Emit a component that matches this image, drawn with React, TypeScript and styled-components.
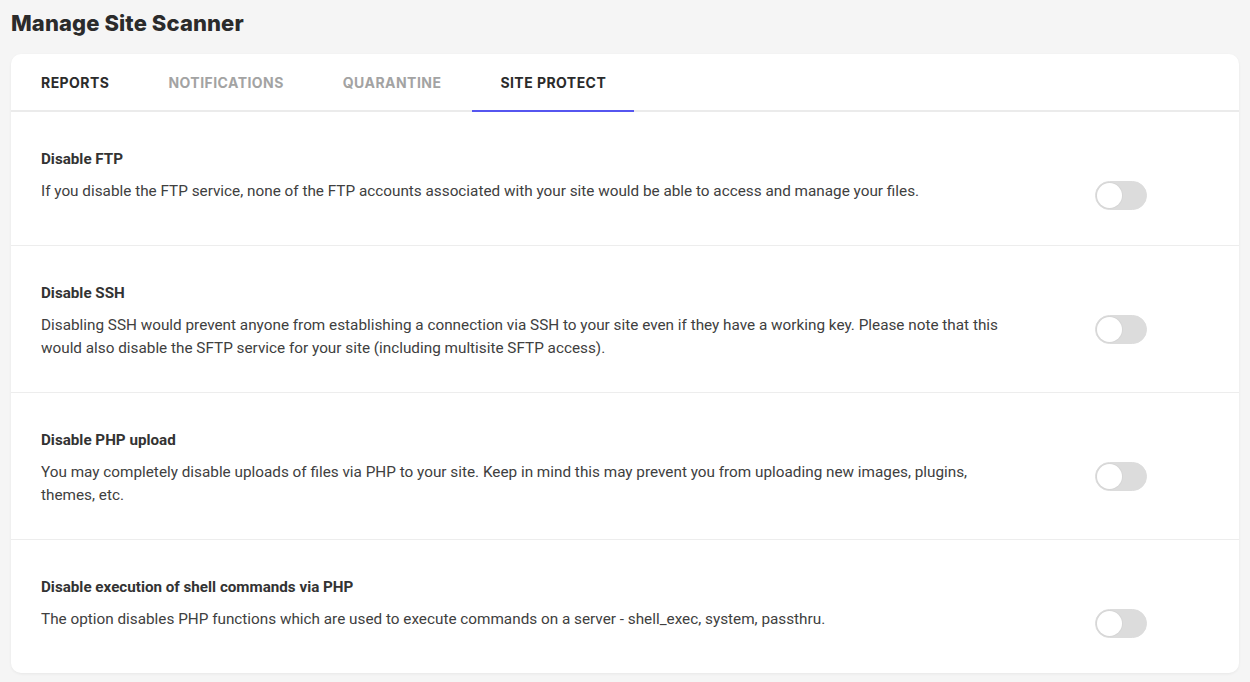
import { useState } from 'react'
import styled, { createGlobalStyle } from 'styled-components'

const GlobalStyle = createGlobalStyle`
  html, body {
    margin: 0;
    padding: 0;
    background: #f5f5f5;
  }
  * {
    box-sizing: border-box;
  }
`

const Page = styled.div`
  padding: 8px 11px 10px 11px;
  font-family: Roboto, 'Liberation Sans', sans-serif;
`

const Heading = styled.h1`
  margin: 0 0 16px 0;
  font-family: Inter, 'DejaVu Sans', sans-serif;
  font-size: 22px;
  line-height: 30px;
  font-weight: 800;
  letter-spacing: 0.1px;
  color: #2b2b2b;
`

const Card = styled.div`
  background: #fff;
  border-radius: 10px;
  box-shadow: 0 1px 3px rgba(0, 0, 0, 0.06);
  overflow: hidden;
`

const Tabs = styled.div`
  display: flex;
  height: 58px;
  padding-left: 2px;
  gap: 3px;
  border-bottom: 2px solid #ebebeb;
`

const Tab = styled.div<{ dark?: boolean; selected?: boolean }>`
  display: flex;
  align-items: center;
  padding: 0 28px;
  margin-bottom: -2px;
  font-family: Inter, 'DejaVu Sans', sans-serif;
  font-size: 14px;
  font-weight: 700;
  letter-spacing: 0.45px;
  text-transform: uppercase;
  color: ${({ dark }) => (dark ? '#2b2b2b' : '#a3a3a3')};
  border-bottom: 2px solid ${({ selected }) => (selected ? '#5656f0' : 'transparent')};
  cursor: pointer;
`

const Section = styled.div`
  padding: 36px 92px 32px 30px;
  border-top: 1px solid #ededed;

  &:first-child {
    border-top: none;
  }
`

const SectionTitle = styled.div`
  font-size: 15.2px;
  line-height: 22px;
  font-weight: 700;
  color: #333;
  margin-bottom: 10px;
`

const Row = styled.div`
  display: flex;
  align-items: flex-start;
  justify-content: space-between;
`

const Description = styled.div`
  max-width: 970px;
  font-size: 15.3px;
  line-height: 23px;
  color: #404040;
`

const SwitchWrap = styled.div`
  height: 33px;
  padding-top: 1px;
  flex-shrink: 0;
`

const Track = styled.button<{ on: boolean }>`
  position: relative;
  width: 52px;
  height: 29px;
  padding: 0;
  border: 1px solid #dcdcdc;
  border-radius: 15px;
  background: ${({ on }) => (on ? '#5656f0' : '#dcdcdc')};
  cursor: pointer;
`

const Knob = styled.span<{ on: boolean }>`
  position: absolute;
  top: 1px;
  left: ${({ on }) => (on ? '24px' : '1px')};
  width: 25px;
  height: 25px;
  border-radius: 50%;
  background: #fff;
  box-shadow: 0 0 0 1px #d6d6d6;
`

const items = [
  {
    title: 'Disable FTP',
    text: 'If you disable the FTP service, none of the FTP accounts associated with your site would be able to access and manage your files.',
  },
  {
    title: 'Disable SSH',
    text: 'Disabling SSH would prevent anyone from establishing a connection via SSH to your site even if they have a working key. Please note that this would also disable the SFTP service for your site (including multisite SFTP access).',
  },
  {
    title: 'Disable PHP upload',
    text: 'You may completely disable uploads of files via PHP to your site. Keep in mind this may prevent you from uploading new images, plugins, themes, etc.',
  },
  {
    title: 'Disable execution of shell commands via PHP',
    text: 'The option disables PHP functions which are used to execute commands on a server - shell_exec, system, passthru.',
  },
]

const tabs = [
  { label: 'Reports', dark: true, selected: false },
  { label: 'Notifications', dark: false, selected: false },
  { label: 'Quarantine', dark: false, selected: false },
  { label: 'Site Protect', dark: true, selected: true },
]

const Toggle = () => {
  const [on, setOn] = useState(false)
  return (
    <SwitchWrap>
      <Track on={on} onClick={() => setOn(!on)}>
        <Knob on={on} />
      </Track>
    </SwitchWrap>
  )
}

const App = () => {
  return (
    <Page>
      <GlobalStyle />
      <Heading>Manage Site Scanner</Heading>
      <Card>
        <Tabs>
          {tabs.map((t) => (
            <Tab key={t.label} dark={t.dark} selected={t.selected}>{t.label}</Tab>
          ))}
        </Tabs>
        <div>
          {items.map((item) => (
            <Section key={item.title}>
              <SectionTitle>{item.title}</SectionTitle>
              <Row>
                <Description>{item.text}</Description>
                <Toggle />
              </Row>
            </Section>
          ))}
        </div>
      </Card>
    </Page>
  )
}

export default App
